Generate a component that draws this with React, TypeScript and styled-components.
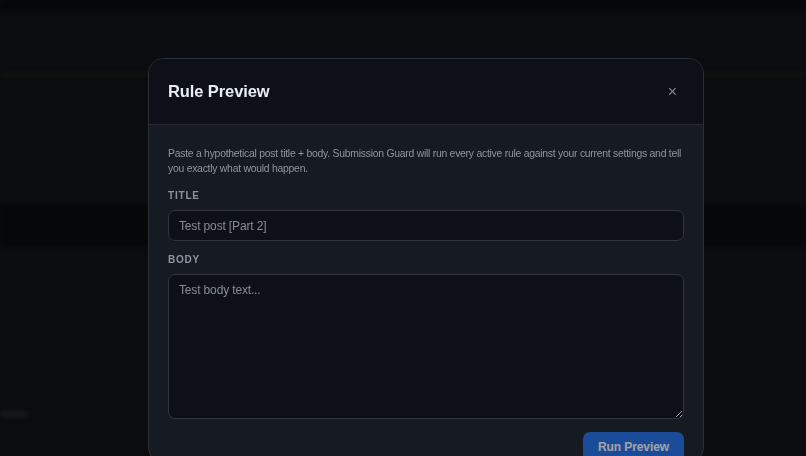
import styled, { createGlobalStyle } from 'styled-components';

const GlobalStyle = createGlobalStyle`
  html, body {
    margin: 0;
    padding: 0;
    background: #0a0c10;
    font-family: 'Liberation Sans', Arial, sans-serif;
    overflow: hidden;
  }
  * { box-sizing: border-box; }
`;

export default function App() {
  return (
    <>
      <GlobalStyle />
      <Page>
        <TopBar />
        <AccentLine />
        <DarkBand />
        <GhostText />
      </Page>
      <Overlay>
        <Modal>
          <Header>
            <Title>Rule Preview</Title>
            <CloseButton aria-label="Close">×</CloseButton>
          </Header>
          <Body>
            <Intro>
              Paste a hypothetical post title + body. Submission Guard will run every active rule against
              your current settings and tell you exactly what would happen.
            </Intro>
            <Field>
              <Label>Title</Label>
              <Input placeholder="Test post [Part 2]" />
            </Field>
            <Field>
              <Label>Body</Label>
              <TextArea placeholder="Test body text..." />
            </Field>
            <Actions>
              <RunButton>Run Preview</RunButton>
            </Actions>
          </Body>
        </Modal>
      </Overlay>
    </>
  );
}

const Page = styled.div`
  width: 806px;
  height: 456px;
  display: flex;
  flex-direction: column;
  filter: blur(2px);
`;

const TopBar = styled.div`
  height: 12px;
  background: #060709;
`;

const AccentLine = styled.div`
  margin-top: 61px;
  height: 3px;
  background: #16140c;
`;

const DarkBand = styled.div`
  margin-top: 130px;
  height: 40px;
  background: #060709;
`;

const GhostText = styled.div`
  margin-top: 165px;
  width: 28px;
  height: 7px;
  background: #15171b;
`;

const Overlay = styled.div`
  position: fixed;
  inset: 0;
  display: flex;
  align-items: flex-start;
  padding: 58px 0 0 148px;
`;

const Modal = styled.div`
  width: 556px;
  border: 1px solid #2a2f37;
  border-radius: 15px;
  overflow: hidden;
  background: #161b22;
`;

const Header = styled.div`
  height: 66px;
  display: flex;
  align-items: center;
  justify-content: space-between;
  padding: 0 26px 0 19px;
  background: #0d1117;
  border-bottom: 1px solid #262b33;
`;

const Title = styled.h2`
  margin: 0;
  font-size: 16.5px;
  letter-spacing: -0.1px;
  font-weight: bold;
  color: #e6edf3;
`;

const CloseButton = styled.button`
  background: none;
  border: none;
  padding: 0;
  color: #7d8590;
  font-size: 16px;
  line-height: 1;
  font-family: 'Liberation Sans', Arial, sans-serif;
  cursor: pointer;
`;

const Body = styled.div`
  padding: 21px 19px 0 19px;
  display: flex;
  flex-direction: column;
`;

const Intro = styled.p`
  margin: 0 0 14px 0;
  font-size: 10.4px;
  letter-spacing: -0.25px;
  line-height: 15px;
  color: #8d959f;
`;

const Field = styled.div`
  display: flex;
  flex-direction: column;
  gap: 8px;
  margin-bottom: 13px;
`;

const Label = styled.label`
  font-size: 10px;
  font-weight: bold;
  letter-spacing: 0.08em;
  text-transform: uppercase;
  color: #8b949e;
  line-height: 12px;
`;

const Input = styled.input`
  height: 31px;
  width: 100%;
  padding: 0 10px;
  background: #0d1117;
  border: 1px solid #30363d;
  border-radius: 7px;
  color: #e6edf3;
  font-family: 'Liberation Sans', Arial, sans-serif;
  font-size: 12px;
  letter-spacing: -0.15px;
  outline: none;

  &::placeholder {
    color: #848c96;
  }
`;

const TextArea = styled.textarea`
  height: 145px;
  width: 100%;
  padding: 8px 10px;
  background: #0d1117;
  border: 1px solid #30363d;
  border-radius: 7px;
  color: #e6edf3;
  font-family: 'Liberation Sans', Arial, sans-serif;
  font-size: 12px;
  letter-spacing: -0.15px;
  outline: none;
  resize: vertical;

  &::placeholder {
    color: #848c96;
  }
`;

const Actions = styled.div`
  display: flex;
  justify-content: flex-end;
`;

const RunButton = styled.button`
  height: 30px;
  width: 101px;
  border: none;
  border-radius: 7px;
  background: #1f6feb;
  color: #ffffff;
  opacity: 0.6;
  font-family: 'Liberation Sans', Arial, sans-serif;
  font-size: 12px;
  letter-spacing: -0.1px;
  font-weight: bold;
  cursor: pointer;
`;
